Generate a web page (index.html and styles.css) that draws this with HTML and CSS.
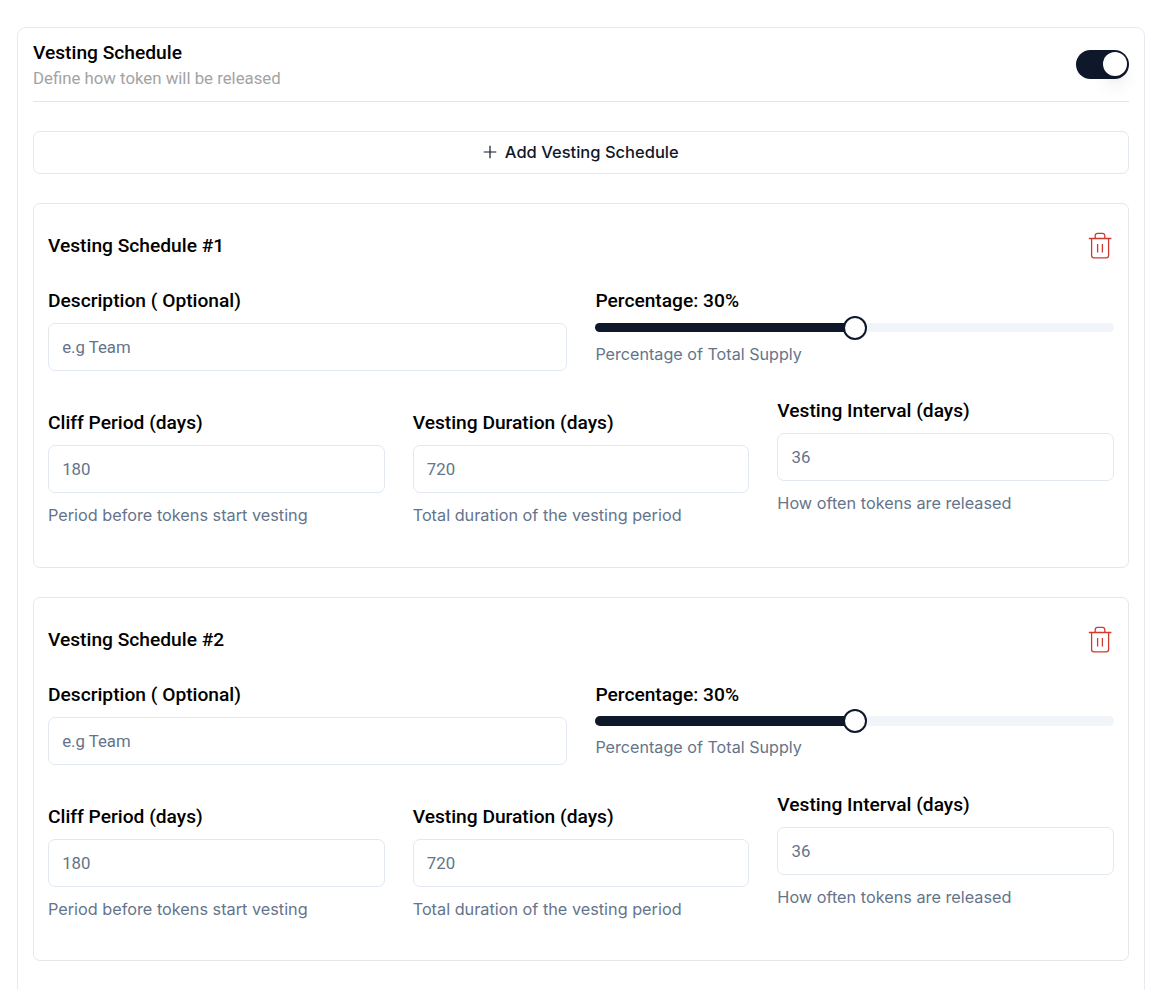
FILE: index.html
```html
<!DOCTYPE html>
<html lang="en">
<head>
<meta charset="utf-8">
<title>Vesting Schedule</title>
<link rel="stylesheet" href="styles.css">
</head>
<body>
<main class="panel">
  <header class="panel-header">
    <div>
      <h1 class="heading">Vesting Schedule</h1>
      <p class="subtitle">Define how token will be released</p>
    </div>
    <button class="switch" role="switch" aria-checked="true" aria-label="Vesting Schedule"><span class="switch-thumb"></span></button>
  </header>

  <button class="add-button">
    <svg class="plus" viewBox="0 0 14 14"><path d="M7 .7v12.600M.7 7h12.600"/></svg>
    <span>Add Vesting Schedule</span>
  </button>

  <section class="card">
    <div class="card-header">
      <h2 class="heading">Vesting Schedule #1</h2>
      <svg class="trash" viewBox="0 0 24 28"><path d="M.8 6.500h22.600M3.600 6.500v17a2.400 2.400 0 0 0 2.400 2.400h12.200a2.400 2.400 0 0 0 2.400-2.400v-17M7.200 6.300V3.600A2.200 2.200 0 0 1 9.400 1.400h5.200A2.200 2.200 0 0 1 16.800 3.600v2.700M9.600 12v8.500M14.400 12v8.500"/></svg>
    </div>
    <div class="row two">
      <div class="field">
        <label class="heading">Description ( Optional)</label>
        <input class="input" placeholder="e.g Team">
      </div>
      <div class="field">
        <label class="heading">Percentage: 30%</label>
        <div class="slider"><div class="slider-fill"></div><div class="slider-thumb"></div></div>
        <p class="help supply">Percentage of Total Supply</p>
      </div>
    </div>
    <div class="row three">
      <div class="field lowered">
        <label class="heading">Cliff Period (days)</label>
        <input class="input" placeholder="180">
        <p class="help">Period before tokens start vesting</p>
      </div>
      <div class="field lowered">
        <label class="heading">Vesting Duration (days)</label>
        <input class="input" placeholder="720">
        <p class="help">Total duration of the vesting period</p>
      </div>
      <div class="field">
        <label class="heading">Vesting Interval (days)</label>
        <input class="input" placeholder="36">
        <p class="help">How often tokens are released</p>
      </div>
    </div>
  </section>

  <section class="card">
    <div class="card-header">
      <h2 class="heading">Vesting Schedule #2</h2>
      <svg class="trash" viewBox="0 0 24 28"><path d="M.8 6.500h22.600M3.600 6.500v17a2.400 2.400 0 0 0 2.400 2.400h12.200a2.400 2.400 0 0 0 2.400-2.400v-17M7.200 6.300V3.600A2.200 2.200 0 0 1 9.400 1.400h5.200A2.200 2.200 0 0 1 16.800 3.600v2.700M9.600 12v8.500M14.400 12v8.500"/></svg>
    </div>
    <div class="row two">
      <div class="field">
        <label class="heading">Description ( Optional)</label>
        <input class="input" placeholder="e.g Team">
      </div>
      <div class="field">
        <label class="heading">Percentage: 30%</label>
        <div class="slider"><div class="slider-fill"></div><div class="slider-thumb"></div></div>
        <p class="help supply">Percentage of Total Supply</p>
      </div>
    </div>
    <div class="row three">
      <div class="field lowered">
        <label class="heading">Cliff Period (days)</label>
        <input class="input" placeholder="180">
        <p class="help">Period before tokens start vesting</p>
      </div>
      <div class="field lowered">
        <label class="heading">Vesting Duration (days)</label>
        <input class="input" placeholder="720">
        <p class="help">Total duration of the vesting period</p>
      </div>
      <div class="field">
        <label class="heading">Vesting Interval (days)</label>
        <input class="input" placeholder="36">
        <p class="help">How often tokens are released</p>
      </div>
    </div>
  </section>
</main>
</body>
</html>
```
FILE: styles.css
```css
* { box-sizing: border-box; margin: 0; padding: 0; }
html, body { height: 990px; overflow: hidden; }
body { background: #fff; font-family: Roboto, sans-serif; padding: 26.6px 26.6px 0 16.600px; }
.panel {
  height: 1000px;
  border: 1px solid #e6ebf2;
  border-radius: 9px;
  padding: 11px 15.400px 0;
}
.panel-header {
  display: flex;
  justify-content: space-between;
  height: 63.400px;
  border-bottom: 1px solid #e2e5ea;
}
.heading { display: block; font-size: 19.2px; font-weight: 500; line-height: 28px; color: #000; }
.subtitle { margin-top: -1px; font-size: 16.8px; line-height: 24px; color: #a3a3a3; }
.switch {
  width: 53px;
  height: 29px;
  margin-top: 11.400px;
  border: 0;
  border-radius: 15px;
  background: #0f172a;
  display: flex;
  justify-content: flex-end;
  align-items: center;
  padding-right: 2.400px;
}
.switch-thumb {
  width: 24px;
  height: 24px;
  border-radius: 50%;
  background: #fff;
  box-shadow: 0 12px 18px -3px rgba(0,0,0,.1), 0 5px 7px -4px rgba(0,0,0,.1);
}
.add-button {
  width: 100%;
  height: 43px;
  margin-top: 29px;
  border: 1px solid #e2e8f0;
  border-radius: 7px;
  background: #fff;
  color: #0f172a;
  font: 500 16.500px Inter, sans-serif;
  display: flex;
  align-items: center;
  justify-content: center;
  gap: 7.500px;
}
.plus { width: 14px; height: 14px; fill: none; stroke: #0f172a; stroke-width: 1.2; }
.card {
  height: 364.600px;
  margin-top: 29px;
  border: 1px solid #e5e7eb;
  border-radius: 7px;
  padding: 27px 14px 0;
}
.card-header { display: flex; justify-content: space-between; height: 56px; }
.card-header .heading { padding-top: 1px; }
.trash { width: 24px; height: 28px; margin: 1.400px 2px 0 0; fill: none; stroke: #cf3a31; stroke-width: 1.3; }
.row { display: grid; }
.two { grid-template-columns: repeat(2, 1fr); column-gap: 28.8px; height: 110px; }
.three { grid-template-columns: repeat(3, 1fr); column-gap: 28px; }
.lowered { padding-top: 12px; }
.input {
  display: block;
  width: 100%;
  height: 48px;
  margin-top: 8px;
  border: 1px solid #e2e8f0;
  border-radius: 7px;
  padding: 0 13.2px;
  font: 400 16.8px Roboto, sans-serif;
  background: #fff;
  color: #0f172a;
}
.input::placeholder { color: #64748b; }
.help { margin-top: 10.300px; font: 400 16.250px/24px Inter, sans-serif; color: #64748b; }
.supply { margin-top: 9.500px; font-size: 16.150px; }
.slider { position: relative; height: 9.600px; margin-top: 7.800px; border-radius: 5px; background: #f1f5f9; }
.slider-fill { width: 50%; height: 100%; border-radius: 5px 0 0 5px; background: #0f172a; }
.slider-thumb {
  position: absolute;
  left: calc(50% - 12.200px);
  top: -7.200px;
  width: 24px;
  height: 24px;
  border: 2.4px solid #0f172a;
  border-radius: 50%;
  background: #fff;
}
```
